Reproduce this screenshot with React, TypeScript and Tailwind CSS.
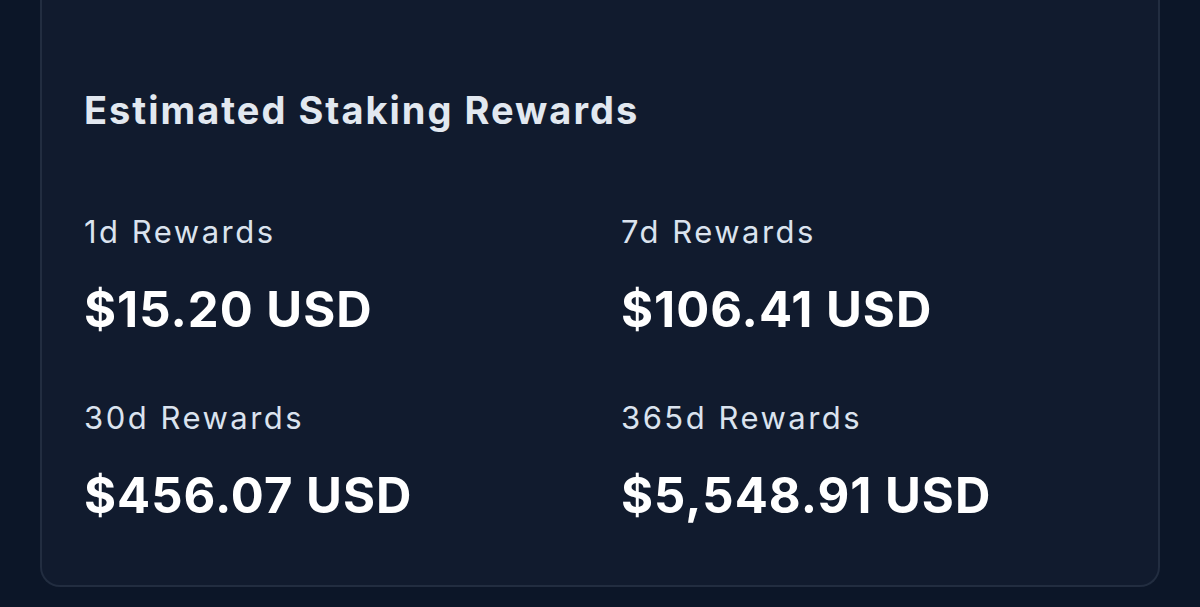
export default function App() {
  const items = [
    { label: "1d Rewards", value: "$15.20 USD" },
    { label: "7d Rewards", value: "$106.41 USD" },
    { label: "30d Rewards", value: "$456.07 USD" },
    { label: "365d Rewards", value: "$5,548.91 USD" },
  ];

  return (
    <div
      className="min-h-[607px] w-[1200px] bg-[#0c1628] px-10 pb-[22px]"
      style={{ fontFamily: "Inter, sans-serif" }}
    >
      <div className="rounded-b-[20px] border-x-2 border-b-2 border-[#222d40] bg-[#111b2e] px-[42px] pt-[86px] pb-[61px]">
        <h2 className="text-[38px] font-bold leading-[48px] tracking-[2px] text-[#e2e8f0]">
          Estimated Staking Rewards
        </h2>
        <div className="mt-[78px] grid grid-cols-2 gap-x-[42px] gap-y-[60px]">
          {items.map((item) => (
            <div key={item.label}>
              <div className="text-[31px] leading-[40px] tracking-[2.5px] text-[#dbe3ee]">
                {item.label}
              </div>
              <div className="mt-[30px] text-[49px] font-bold leading-[56px] tracking-[1px] text-white">
                {item.value}
              </div>
            </div>
          ))}
        </div>
      </div>
    </div>
  );
}
